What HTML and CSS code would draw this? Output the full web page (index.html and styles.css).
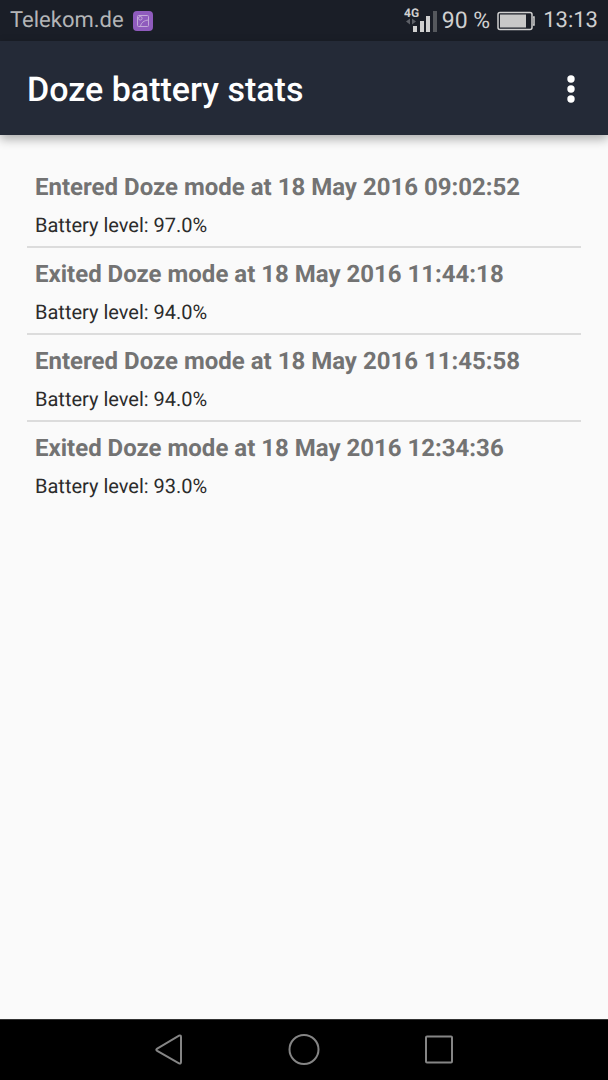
FILE: index.html
```
<!DOCTYPE html>
<html lang="en">
<head>
<meta charset="utf-8">
<meta name="viewport" content="width=device-width, initial-scale=1">
<title>Doze battery stats</title>
<link rel="stylesheet" href="styles.css">
</head>
<body>
<div class="screen">
  <div class="status-bar">
    <span class="carrier">Telekom.de</span>
    <svg class="notification" width="20" height="20" viewBox="0 0 20 20" fill="none" aria-hidden="true">
      <rect width="20" height="20" rx="4" fill="#8f5bbd"/>
      <g stroke="#c3a9d8">
        <rect x="4.500" y="4.500" width="11" height="11" rx="1"/>
        <circle cx="7.300" cy="7.300" r="1.800"/>
        <path d="M7.500 15.500C8 11.500 11 9.500 15.500 9"/>
      </g>
    </svg>
    <svg class="signal" width="34" height="28" viewBox="0 0 34 28" role="img" aria-label="Mobile signal">
      <text class="network" x="0" y="10">4G</text>
      <path d="M2 14.500L6 11.500V17.500ZM12 14.500L8 11.500V17.500Z" fill="#5d6067"/>
      <path d="M9 19h4v6H9ZM16 14h4v11h-4ZM22 9h4v16h-4Z" fill="#d0d0d0"/>
      <path d="M29 4h4v21h-4Z" fill="#55585d"/>
    </svg>
    <span class="percent">90 %</span>
    <svg class="battery" width="38" height="20" viewBox="0 0 38 20" fill="none" role="img" aria-label="Battery 90 percent">
      <rect x="1" y="1.500" width="34" height="17" rx="2" stroke="#d0d0d0" stroke-width="1.500"/>
      <rect x="3" y="3.500" width="26" height="13" fill="#c8c8c8"/>
      <path d="M36 6h1v8h-1" stroke="#d0d0d0" stroke-width="1.500"/>
    </svg>
    <span class="clock">13:13</span>
  </div>
  <header class="app-bar">
    <h1 class="app-title">Doze battery stats</h1>
    <button class="menu" type="button" aria-label="More options">
      <svg width="8" height="28" viewBox="0 0 8 28" fill="#fff" aria-hidden="true">
        <circle cx="4" cy="4" r="3.700"/><circle cx="4" cy="14" r="3.700"/><circle cx="4" cy="24" r="3.700"/>
      </svg>
    </button>
  </header>
  <main class="content">
    <ul class="events">
      <li class="event"><h2 class="event-title">Entered Doze mode at 18 May 2016 09:02:52</h2><p class="event-level">Battery level: 97.0%</p></li>
      <li class="event"><h2 class="event-title">Exited Doze mode at 18 May 2016 11:44:18</h2><p class="event-level">Battery level: 94.0%</p></li>
      <li class="event"><h2 class="event-title">Entered Doze mode at 18 May 2016 11:45:58</h2><p class="event-level">Battery level: 94.0%</p></li>
      <li class="event"><h2 class="event-title">Exited Doze mode at 18 May 2016 12:34:36</h2><p class="event-level">Battery level: 93.0%</p></li>
    </ul>
  </main>
  <nav class="nav-bar" aria-label="System navigation">
    <button class="nav-button" type="button" aria-label="Back">
      <svg width="32" height="32" viewBox="0 0 32 32"><path d="M4.200 14.600L26 1.600Q28 1 28 3V28Q28 30 26 29.400L4.200 16.800Q2.400 15.700 4.200 14.600Z"/></svg>
    </button>
    <button class="nav-button" type="button" aria-label="Home">
      <svg width="32" height="32" viewBox="0 0 32 32"><circle cx="16" cy="15.500" r="14.500"/></svg>
    </button>
    <button class="nav-button" type="button" aria-label="Recent apps">
      <svg width="32" height="32" viewBox="0 0 32 32"><rect x="3" y="2.500" width="26" height="26" rx="1"/></svg>
    </button>
  </nav>
</div>
</body>
</html>
```
FILE: styles.css
```
* {
  box-sizing: border-box;
}

body,
h1,
h2,
p,
ul {
  margin: 0;
  padding: 0;
}

body {
  font-family: Roboto, "Noto Sans", sans-serif;
  text-rendering: geometricPrecision;
  background: #fafafa;
}

button {
  display: flex;
  align-items: center;
  justify-content: center;
  padding: 0;
  border: 0;
  background: none;
}

.screen {
  display: flex;
  flex-direction: column;
  min-height: 100vh;
}

.status-bar {
  display: flex;
  align-items: center;
  height: 41px;
  padding: 1px 10px 0;
  background: #1a1e27;
  color: #d0d0d0;
  font-size: 22px;
  line-height: 28px;
}

.carrier {
  color: #b4b5b7;
}

.notification {
  margin-left: 9px;
}

.signal {
  margin-left: auto;
}

.network {
  fill: #d0d0d0;
  font-size: 12px;
  font-weight: 700;
}

.percent {
  margin: 0 7px 0 4px;
  font-size: 23px;
}

.clock {
  margin-left: 8px;
}

.app-bar {
  display: flex;
  align-items: center;
  justify-content: space-between;
  height: 94px;
  padding: 1px 17px 0 27px;
  background: #242a37;
  color: #fff;
  box-shadow: 0 4px 10px rgba(0, 0, 0, 0.32);
}

.app-title {
  padding-top: 2px;
  font-size: 34px;
  font-weight: 500;
  line-height: 40px;
}

.menu {
  width: 40px;
  height: 48px;
  color: inherit;
}

.content {
  flex: 1;
  padding: 26px 27px;
}

.events {
  list-style: none;
}

.event {
  padding: 8px 8px 7px;
}

.event + .event {
  border-top: 2px solid #dcdcdc;
}

.event-title {
  color: #737373;
  font-size: 24px;
  font-weight: 700;
  line-height: 36px;
}

.event-level {
  padding-top: 6px;
  color: #2b2b2b;
  font-size: 20px;
  line-height: 28px;
}

.nav-bar {
  display: flex;
  align-items: center;
  justify-content: center;
  gap: 71px;
  height: 61px;
  border-top: 1px solid #333;
  background: #000;
}

.nav-button {
  width: 64px;
  height: 48px;
}

.nav-button svg {
  fill: none;
  stroke: #858585;
  stroke-width: 2;
}
```
